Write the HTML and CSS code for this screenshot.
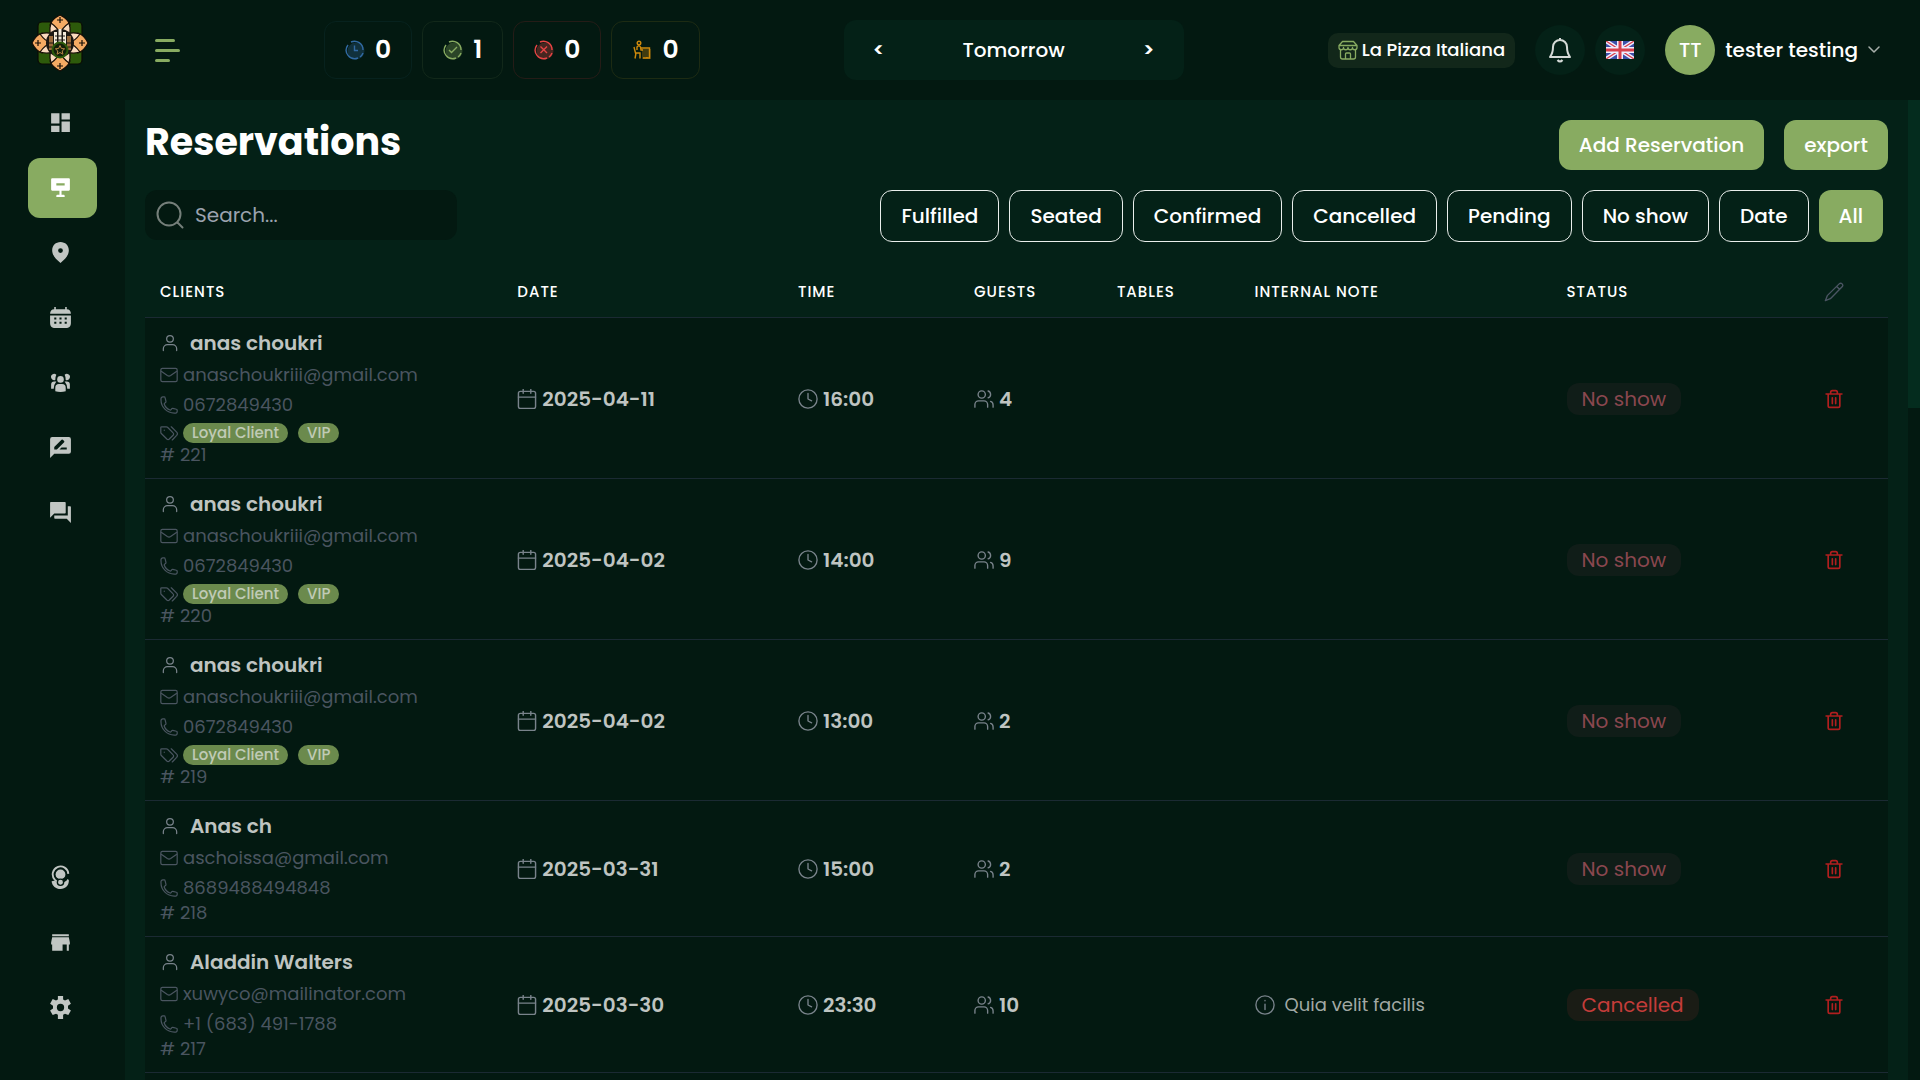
FILE: index.html
```html
<!DOCTYPE html>
<html lang="en">
<head>
<meta charset="utf-8">
<title>Reservations</title>
<link rel="stylesheet" href="styles.css">
</head>
<body>
<svg class="sprite" aria-hidden="true">
  <symbol id="i-user" viewBox="0 0 24 24"><circle cx="12" cy="7" r="4"/><path d="M20 21v-2a5 5 0 0 0-5-5H9a5 5 0 0 0-5 5v2"/></symbol>
  <symbol id="i-mail" viewBox="1 1 22 22"><rect x="2" y="4" width="20" height="16" rx="2"/><path d="M2.500 7.500l7.500 5.200q2 1.300 4 0l7.500-5.200"/></symbol>
  <symbol id="i-phone" viewBox="1 1 22 22"><path d="M2.200 5.500c0 9 7.300 16.300 16.300 16.300h2.300a2 2 0 0 0 1.200-1.800v-1.700a1.100 1.100 0 0 0-.9-1.100l-4.400-1.100a1.200 1.200 0 0 0-1.200.4l-1 1.300a1 1 0 0 1-1.200.3 12 12 0 0 1-7.100-7.100 1 1 0 0 1 .4-1.200l1.200-1a1.200 1.200 0 0 0 .5-1.200L7.200 3.100A1.100 1.100 0 0 0 6.100 2.200H4.400a2.200 2.200 0 0 0-2.200 2.200z"/></symbol>
  <symbol id="i-tags" viewBox="1 1 22 22"><path d="M2 5.500v5.600a2 2 0 0 0 .6 1.500l6.800 6.800a2 2 0 0 0 2.900 0l4.700-4.700a2 2 0 0 0 0-2.900L10.200 5a2 2 0 0 0-1.500-.6H3.100A1 1 0 0 0 2 5.500z"/><path d="M16 20.500l5.400-5.600a3 3 0 0 0 0-4L14.800 4.400M6.200 8.600v.1"/></symbol>
  <symbol id="i-calendar" viewBox="1.500 1.500 21 21"><rect x="3" y="4" width="18" height="18" rx="2"/><path d="M3 10h18M8 2v4M16 2v4"/></symbol>
  <symbol id="i-clock" viewBox="1 1 22 22"><circle cx="12" cy="12" r="10"/><path d="M12 6v6l4 2"/></symbol>
  <symbol id="i-guests" viewBox="1 1 22 22"><path d="M2 21v-3a4 4 0 0 1 4-4h6a4 4 0 0 1 4 4v3M22 21v-2.500a4 4 0 0 0-2.800-3.800M16.500 3.200a4 4 0 0 1 0 7.600"/><circle cx="9.500" cy="7" r="4"/></symbol>
  <symbol id="i-trash" viewBox="0 0 24 24"><path d="M2.500 6h19M19 6v14a2 2 0 0 1-2 2H7a2 2 0 0 1-2-2V6M8 6V4a2 2 0 0 1 2-2h4a2 2 0 0 1 2 2v2M10 10.500v7M14 10.500v7"/></symbol>
  <symbol id="i-pencil" viewBox="1 1 22 22"><path d="M18 2.800a2.300 2.300 0 0 1 3.200 3.200L8 19.400l-5.500 2.100L4.600 16zM15 6l3 3"/></symbol>
  <symbol id="i-info" viewBox="1 1 22 22"><circle cx="12" cy="12" r="10"/><path d="M12 11v6M12 7v.4"/></symbol>
</svg>

<div class="app">
  <aside class="sidebar">
    <a href="#" class="logo" aria-label="Home">
      <svg width="58" height="58" viewBox="0 0 58 58">
        <g fill="#2d5a0b" stroke="#0a0a05" stroke-width="1.200">
          <rect x="7" y="8" width="20" height="20" rx="4"/><rect x="31" y="8" width="20" height="20" rx="4"/>
          <rect x="7" y="31" width="20" height="19" rx="4"/><rect x="31" y="31" width="20" height="19" rx="4"/>
        </g>
        <g stroke="#150d06" stroke-width="1.200">
          <g fill="#f5aa63">
            <path d="M29 1q8 4 10 10-4 4-10 12-6-8-10-12 2-6 10-10z"/><path d="M29 57q8-4 10-10-4-4-10-12-6 8-10 12 2 6 10 10z"/>
            <path d="M1 29q4-8 10-10 4 4 12 10-8 6-12 10-6-2-10-10z"/><path d="M57 29q-4-8-10-10-4 4-12 10 8 6 12 10 6-2 10-10z"/>
          </g>
          <g fill="#f9d9bd">
            <path d="M20 9q-3 10 2 15l7-4q-2-6-9-11z"/><path d="M38 9q3 10-2 15l-7-4q2-6 9-11z"/>
            <path d="M20 49q-3-10 2-15l7 4q-2 6-9 11z"/><path d="M38 49q3-10-2-15l-7 4q2 6 9 11z"/>
            <path d="M9 20q10-3 15 2l-4 7q-6-2-11-9z"/><path d="M49 20q-10-3-15 2l4 7q6-2 11-9z"/>
            <path d="M9 38q10 3 15-2l-4-7q-6 2-11 9z"/><path d="M49 38q-10 3-15-2l4-7q6 2 11 9z"/>
          </g>
          <path d="M29 3v6M26 6h6M29 49v6M26 52h6M4 29h6M7 26v6M48 29h6M51 26v6" fill="none"/>
        </g>
        <circle cx="29" cy="29" r="14" fill="#1b1712"/>
        <path d="M18 22h4v14h-4zM36 22h4v14h-4z" fill="#9b6b3b"/>
        <path d="M23 18h3v15h-3zM27.500 15h3v18h-3zM32 18h3v15h-3z" fill="#f3ead9"/>
        <path d="M15 29h7M36 29h7M16 33h5M37 33h5M24 22h10M24 26h10" stroke="#1b1712"/>
        <circle cx="29" cy="36" r="7.500" fill="#12200a" stroke="#2d5a0b" stroke-width="2"/>
        <path d="M29 31.500l1.400 3 3.200.3-2.400 2.200.7 3.200-2.900-1.700-2.900 1.700.7-3.200-2.400-2.200 3.200-.3z" fill="none" stroke="#b98546"/>
      </svg>
    </a>
    <nav class="nav nav-top" aria-label="Main">
      <a href="#" aria-label="Dashboard"><svg viewBox="0 0 24 24"><path d="M3 13h8V3H3zM3 21h8v-6H3zM13 21h8V11h-8zM13 3v6h8V3z"/></svg></a>
      <a href="#" class="active" aria-label="Reservations"><svg viewBox="0 0 24 24"><path fill-rule="evenodd" d="M4 3h16a1 1 0 0 1 1 1v10a1 1 0 0 1-1 1h-7v4h2a1 1 0 0 1 1 1v1H8v-1a1 1 0 0 1 1-1h2v-4H4a1 1 0 0 1-1-1V4a1 1 0 0 1 1-1zM8 8v2h8V8z"/></svg></a>
      <a href="#" aria-label="Places"><svg viewBox="0 0 24 24"><path fill-rule="evenodd" d="M12 2c-4.600 0-8 3.400-8 7.800 0 4.700 3.500 8.700 8 12.200 4.500-3.500 8-7.500 8-12.200C20 5.400 16.600 2 12 2zm0 5.800a2.300 2.300 0 1 1 0 4.600 2.300 2.300 0 0 1 0-4.600z"/></svg></a>
      <a href="#" aria-label="Calendar"><svg viewBox="0 0 24 24"><path d="M2 8.500C2 5.800 3.400 4 6 4V2h1.500v2h9V2H18v2c2.600 0 4 1.800 4 4.500z"/><path fill-rule="evenodd" d="M2 10h20v7c0 3.500-1.500 5-5 5H7c-3.500 0-5-1.500-5-5zm4 2v2h2v-2zm5 0v2h2v-2zm5 0v2h2v-2zM6 16v2h2v-2zm5 0v2h2v-2zm5 0v2h2v-2z"/></svg></a>
      <a href="#" aria-label="Clients"><svg viewBox="0 0 24 24"><circle cx="12" cy="9" r="3.200"/><path d="M7 20.500v-3.500a3.500 3.500 0 0 1 3.500-3.500h3a3.500 3.500 0 0 1 3.500 3.500v3.500q-5 1.200-10 0zM8 4.500a3 3 0 1 0-1 5q0-3 1-5zM16 4.500a3 3 0 1 1 1 5q0-3-1-5zM3 18v-4a3 3 0 0 1 3-3h2q-2.500 3-2.500 7zM21 18v-4a3 3 0 0 0-3-3h-2q2.500 3 2.500 7z"/></svg></a>
      <a href="#" aria-label="Reviews"><svg viewBox="0 0 24 24"><path fill-rule="evenodd" d="M4 2h16a2 2 0 0 1 2 2v12a2 2 0 0 1-2 2H6l-4 4V4a2 2 0 0 1 2-2zm2 12h2.500l7-7a1 1 0 0 0 0-1.200l-1.300-1.300a1 1 0 0 0-1.200 0l-7 7zm12 0v-2h-5l-2 2z"/></svg></a>
      <a href="#" aria-label="Messages"><svg viewBox="0 0 24 24"><path d="M21 6h-2v9H6v2c0 .6.400 1 1 1h11l4 4V7c0-.6-.4-1-1-1zM17 12V3c0-.6-.4-1-1-1H3c-.6 0-1 .4-1 1v14l4-4h10c.6 0 1-.4 1-1z"/></svg></a>
    </nav>
    <nav class="nav nav-bottom" aria-label="Settings">
      <a href="#" aria-label="Plans"><svg viewBox="0 0 24 24"><path d="M3.500 15.500c.4 4.500 4 7.500 8.500 7.500 4.700 0 8.300-3.200 8-8.500l-1.200-1H14z"/><circle cx="12" cy="9" r="8.200" fill="#031911"/><circle cx="12" cy="9" r="4.700"/><path d="M19.500 8.500A7.500 7.500 0 1 0 6.500 14l3 3" fill="none" stroke="currentColor" stroke-width="1.800"/><circle cx="12" cy="16.500" r="3" stroke="#031911" stroke-width="1.300"/></svg></a>
      <a href="#" aria-label="Store"><svg viewBox="0 0 24 24"><path d="M4 4h16v2H4zM20 7H4l-1 5v2h1v6h10v-6h4v6h2v-6h1v-2z"/></svg></a>
      <a href="#" aria-label="Preferences"><svg viewBox="0 0 24 24"><path fill-rule="evenodd" d="M9.500 1h5v3.300q1 .4 1.800 1l3.200-1.400 2.500 4.400-2.800 2v2.600l2.800 2-2.500 4.400-3.200-1.400q-.8.600-1.800 1V23h-5v-4.100q-1-.4-1.800-1l-3.200 1.400L2 14.900l2.800-2v-2.600L2 8.300l2.500-4.400 3.200 1.400q.8-.6 1.800-1zM12 8.500a3.500 3.500 0 1 0 0 7 3.500 3.500 0 0 0 0-7z"/></svg></a>
    </nav>
  </aside>

  <div class="content">
    <header class="topbar">
      <button class="menu" aria-label="Toggle menu"><span class="bar mid"></span><span class="bar"></span><span class="bar short"></span></button>
      <div class="stats">
        <div class="stat pending"><svg viewBox="0 0 20 20"><circle class="shade" cx="11" cy="11" r="8.500"/><path d="M6 2a8.500 8.500 0 0 1 12 8M18 13a8.500 8.500 0 0 1-3 4M13 18A8.500 8.500 0 0 1 3 5M9.500 5.500V10.500H13"/></svg>0</div>
        <div class="stat confirmed"><svg viewBox="0 0 20 20"><circle class="shade" cx="11" cy="11" r="8.500"/><path d="M6 2a8.500 8.500 0 0 1 12 8M18 13a8.500 8.500 0 0 1-3 4M13 18A8.500 8.500 0 0 1 3 5M6 10l2.500 2.500L14 7"/></svg>1</div>
        <div class="stat cancelled"><svg viewBox="0 0 20 20"><circle class="shade" cx="11" cy="11" r="8.500"/><path d="M6 2a8.500 8.500 0 0 1 12 8M18 13a8.500 8.500 0 0 1-3 4M13 18A8.500 8.500 0 0 1 3 5M6.500 6.500l6.500 6.500M13 6.500L6.500 13"/></svg>0</div>
        <div class="stat seated"><svg viewBox="0 0 20 20"><rect class="shade" x="10" y="9" width="9" height="10"/><path d="M2 7l1.500 6H8v5.500M4 13l-1 5.500M5 10V7q2-2.500 3.500 0L9 10h2M9 8h8.500v10H11M15 18v-1"/><circle cx="7" cy="3" r="1.800"/></svg>0</div>
      </div>
      <div class="day">
        <button aria-label="Previous day">&lt;</button><span>Tomorrow</span><button aria-label="Next day">&gt;</button>
      </div>
      <div class="account">
        <a href="#" class="place"><svg viewBox="0 0 20 20"><path d="M4.500 1.500h11L19 5.500v2a2.200 2.200 0 0 1-4.500 0 2.200 2.200 0 0 1-4.500 0 2.200 2.200 0 0 1-4.500 0A2.200 2.200 0 0 1 1 7.500v-2zM1 5.500h18M2.500 9.500v7.500a2 2 0 0 0 2 2h11a2 2 0 0 0 2-2V9.500M7.500 19v-5a1 1 0 0 1 1-1h3a1 1 0 0 1 1 1v5"/></svg>La Pizza Italiana</a>
        <button class="round" aria-label="Notifications"><svg width="24" height="28" viewBox="0 0 24 28"><path d="M2 21q3-4 3-10a7 7 0 0 1 14 0q0 6 3 10zM12 4V2" /><path d="M9.500 24q2.500 3 5 0"/></svg></button>
        <button class="round" aria-label="Language"><svg width="28" height="18" viewBox="0 0 28 18"><path fill="#3c4fa8" stroke="none" d="M0 0h28v18H0z"/><path d="M0 0l28 18M28 0L0 18" stroke="#eef" stroke-width="4"/><path d="M0 0l28 18M28 0L0 18" stroke="#d8404c" stroke-width="1.300"/><path d="M14 0v18M0 9h28" stroke="#eef" stroke-width="6"/><path d="M14 0v18M0 9h28" stroke="#d8404c" stroke-width="3"/></svg></button>
        <button class="profile"><span class="avatar">TT</span><span>tester testing</span><svg width="12" height="8" viewBox="0 0 12 8"><path d="M1 1l5 5 5-5"/></svg></button>
      </div>
    </header>

    <div class="view">
      <main class="main">
        <div class="title-row">
          <h1>Reservations</h1>
          <div class="actions"><button class="primary">Add Reservation</button><button class="primary">export</button></div>
        </div>
        <div class="tools">
          <label class="search"><svg viewBox="0 0 28 28"><circle cx="13" cy="13" r="11.500"/><path d="M21.500 21.500l5 5"/></svg><input type="search" placeholder="Search..." aria-label="Search"></label>
          <div class="filters">
            <button>Fulfilled</button><button>Seated</button><button>Confirmed</button><button>Cancelled</button><button>Pending</button><button>No show</button><button>Date</button><button class="on">All</button>
          </div>
        </div>
        <table>
          <colgroup><col class="c-client"><col class="c-date"><col class="c-time"><col class="c-guests"><col class="c-tables"><col class="c-note"><col class="c-status"><col class="c-edit"></colgroup>
          <thead>
            <tr><th>CLIENTS</th><th>DATE</th><th>TIME</th><th>GUESTS</th><th>TABLES</th><th>INTERNAL NOTE</th><th>STATUS</th><th class="edit"><svg class="icon" aria-label="Edit"><use href="#i-pencil"/></svg></th></tr>
          </thead>
          <tbody>
            <tr>
              <td class="client"><div class="name"><svg class="icon"><use href="#i-user"/></svg>anas choukri</div><div class="line"><svg class="icon"><use href="#i-mail"/></svg>anaschoukriii@gmail.com</div><div class="line"><svg class="icon"><use href="#i-phone"/></svg>0672849430</div><div class="tags"><svg class="icon"><use href="#i-tags"/></svg><span>Loyal Client</span><span>VIP</span></div><div class="num"># 221</div></td>
              <td><div class="fact"><svg class="icon"><use href="#i-calendar"/></svg>2025-04-11</div></td>
              <td><div class="fact"><svg class="icon"><use href="#i-clock"/></svg>16:00</div></td>
              <td><div class="fact"><svg class="icon"><use href="#i-guests"/></svg>4</div></td>
              <td></td><td></td>
              <td><span class="status">No show</span></td>
              <td class="edit"><button class="del" aria-label="Delete"><svg class="icon"><use href="#i-trash"/></svg></button></td>
            </tr>
            <tr>
              <td class="client"><div class="name"><svg class="icon"><use href="#i-user"/></svg>anas choukri</div><div class="line"><svg class="icon"><use href="#i-mail"/></svg>anaschoukriii@gmail.com</div><div class="line"><svg class="icon"><use href="#i-phone"/></svg>0672849430</div><div class="tags"><svg class="icon"><use href="#i-tags"/></svg><span>Loyal Client</span><span>VIP</span></div><div class="num"># 220</div></td>
              <td><div class="fact"><svg class="icon"><use href="#i-calendar"/></svg>2025-04-02</div></td>
              <td><div class="fact"><svg class="icon"><use href="#i-clock"/></svg>14:00</div></td>
              <td><div class="fact"><svg class="icon"><use href="#i-guests"/></svg>9</div></td>
              <td></td><td></td>
              <td><span class="status">No show</span></td>
              <td class="edit"><button class="del" aria-label="Delete"><svg class="icon"><use href="#i-trash"/></svg></button></td>
            </tr>
            <tr>
              <td class="client"><div class="name"><svg class="icon"><use href="#i-user"/></svg>anas choukri</div><div class="line"><svg class="icon"><use href="#i-mail"/></svg>anaschoukriii@gmail.com</div><div class="line"><svg class="icon"><use href="#i-phone"/></svg>0672849430</div><div class="tags"><svg class="icon"><use href="#i-tags"/></svg><span>Loyal Client</span><span>VIP</span></div><div class="num"># 219</div></td>
              <td><div class="fact"><svg class="icon"><use href="#i-calendar"/></svg>2025-04-02</div></td>
              <td><div class="fact"><svg class="icon"><use href="#i-clock"/></svg>13:00</div></td>
              <td><div class="fact"><svg class="icon"><use href="#i-guests"/></svg>2</div></td>
              <td></td><td></td>
              <td><span class="status">No show</span></td>
              <td class="edit"><button class="del" aria-label="Delete"><svg class="icon"><use href="#i-trash"/></svg></button></td>
            </tr>
            <tr>
              <td class="client"><div class="name"><svg class="icon"><use href="#i-user"/></svg>Anas ch</div><div class="line"><svg class="icon"><use href="#i-mail"/></svg>aschoissa@gmail.com</div><div class="line"><svg class="icon"><use href="#i-phone"/></svg>8689488494848</div><div class="num"># 218</div></td>
              <td><div class="fact"><svg class="icon"><use href="#i-calendar"/></svg>2025-03-31</div></td>
              <td><div class="fact"><svg class="icon"><use href="#i-clock"/></svg>15:00</div></td>
              <td><div class="fact"><svg class="icon"><use href="#i-guests"/></svg>2</div></td>
              <td></td><td></td>
              <td><span class="status">No show</span></td>
              <td class="edit"><button class="del" aria-label="Delete"><svg class="icon"><use href="#i-trash"/></svg></button></td>
            </tr>
            <tr>
              <td class="client"><div class="name"><svg class="icon"><use href="#i-user"/></svg>Aladdin Walters</div><div class="line"><svg class="icon"><use href="#i-mail"/></svg>xuwyco@mailinator.com</div><div class="line"><svg class="icon"><use href="#i-phone"/></svg>+1 (683) 491-1788</div><div class="num"># 217</div></td>
              <td><div class="fact"><svg class="icon"><use href="#i-calendar"/></svg>2025-03-30</div></td>
              <td><div class="fact"><svg class="icon"><use href="#i-clock"/></svg>23:30</div></td>
              <td><div class="fact"><svg class="icon"><use href="#i-guests"/></svg>10</div></td>
              <td></td><td><div class="note"><svg class="icon"><use href="#i-info"/></svg>Quia velit facilis</div></td>
              <td><span class="status cancelled-status">Cancelled</span></td>
              <td class="edit"><button class="del" aria-label="Delete"><svg class="icon"><use href="#i-trash"/></svg></button></td>
            </tr>
            <tr><td colspan="8"></td></tr>
          </tbody>
        </table>
      </main>
      <div class="scroll"><div class="thumb"></div></div>
    </div>
  </div>
</div>
</body>
</html>
```
FILE: styles.css
```css
:root {
  --deep: #031911;
  --panel: #042117;
  --green: #88ab61;
}
* { box-sizing: border-box; }
body {
  margin: 0;
  background: var(--deep);
  color: #fff;
  font: 500 20px/30px Poppins, Inter, sans-serif;
}
button {
  border: 0;
  padding: 0;
  background: none;
  color: inherit;
  font: inherit;
  cursor: pointer;
}
a { color: inherit; text-decoration: none; }
svg { display: block; flex: none; }
.sprite { position: absolute; width: 0; height: 0; }
.icon {
  width: 20px;
  height: 20px;
  fill: none;
  stroke: currentColor;
  stroke-width: 1.5;
  stroke-linecap: round;
  stroke-linejoin: round;
}

.app { display: flex; height: 100vh; overflow: hidden; }

.sidebar {
  flex: none;
  width: 125px;
  display: flex;
  flex-direction: column;
  padding: 14px 28px 43px;
}
.logo { align-self: center; margin: 0 6px 21px 0; }
.nav { display: flex; flex-direction: column; gap: 5px; color: #c1c6c3; }
.nav a {
  display: flex;
  align-items: center;
  justify-content: center;
  height: 60px;
  padding-right: 4px;
  border-radius: 12px;
}
.nav-top a { padding-bottom: 2px; }
.nav svg { width: 25px; height: 25px; fill: currentColor; }
.nav .active { background: var(--green); color: #fff; }
.nav-bottom { margin-top: auto; }

.content { flex: 1; min-width: 0; display: flex; flex-direction: column; }

.topbar {
  flex: none;
  height: 100px;
  display: flex;
  align-items: center;
  justify-content: space-between;
  padding: 0 40px 0 30px;
}
.menu { display: flex; flex-direction: column; gap: 7px; width: 25px; }
.bar { width: 25px; height: 3px; border-radius: 2px; background: var(--green); }
.bar.mid { width: 20px; }
.bar.short { width: 15px; }
.stats { display: flex; gap: 10px; }
.stat {
  display: flex;
  align-items: center;
  gap: 10px;
  height: 58px;
  padding: 0 20px;
  border: 1px solid;
  border-radius: 12px;
  font-size: 25px;
  font-weight: 600;
}
.stat svg {
  width: 20px;
  height: 20px;
  fill: none;
  stroke: var(--tone);
  stroke-width: 1.4;
}
.stat .shade { fill: var(--tone); fill-opacity: .3; stroke: none; }
.pending { --tone: #316aa3; border-color: #07221e; }
.confirmed { --tone: #88ab61; border-color: #12281a; }
.cancelled { --tone: #e64444; border-color: #251c17; }
.seated { --tone: #cf8a0c; border-color: #1d2b13; }
.day {
  width: 340px;
  height: 60px;
  display: flex;
  align-items: center;
  justify-content: space-between;
  padding: 0 25px;
  border-radius: 12px;
  background: var(--panel);
}
.day button { width: 20px; font-weight: 600; }
.account { display: flex; align-items: center; gap: 10px; }
.account svg {
  fill: none;
  stroke: #d5dad7;
  stroke-width: 2;
  stroke-linecap: round;
  stroke-linejoin: round;
}
.place {
  display: flex;
  align-items: center;
  gap: 4px;
  height: 35px;
  margin-right: 10px;
  padding: 0 10px;
  border-radius: 10px;
  background: #12271a;
  font-size: 18px;
}
.account .place svg { width: 20px; height: 20px; stroke: var(--green); stroke-width: 1.3; }
.round {
  display: flex;
  align-items: center;
  justify-content: center;
  width: 50px;
  height: 50px;
  border-radius: 50%;
  background: var(--panel);
}
.account .round svg { stroke-linecap: butt; }
.profile { display: flex; align-items: center; gap: 10px; margin-left: 10px; }
.avatar {
  width: 50px;
  height: 50px;
  border-radius: 50%;
  background: var(--green);
  line-height: 50px;
}
.account .profile svg { stroke: #a8afab; stroke-width: 1.5; }

.view { flex: 1; min-height: 0; display: flex; background: var(--panel); }
.main { flex: 1; min-width: 0; padding: 20px; overflow: hidden; }
.scroll { flex: none; width: 12px; background: var(--deep); }
.thumb { height: 31.4%; background: #042c1e; }

.title-row { display: flex; justify-content: space-between; margin-bottom: 20px; }
h1 { margin: 0; font-size: 38px; line-height: 44px; font-weight: 700; }
.actions { display: flex; gap: 20px; }
.primary {
  height: 50px;
  padding: 0 20px;
  border-radius: 12px;
  background: var(--green);
}
.tools { display: flex; justify-content: space-between; padding-right: 5px; }
.search {
  display: flex;
  align-items: center;
  gap: 11px;
  width: 312px;
  height: 50px;
  padding: 0 11px;
  border-radius: 12px;
  background: var(--deep);
}
.search svg {
  width: 28px;
  height: 28px;
  fill: none;
  stroke: #757f7a;
  stroke-width: 2;
  stroke-linecap: round;
}
.search input {
  width: 100%;
  min-width: 0;
  border: 0;
  padding: 0;
  outline: 0;
  background: none;
  color: #fff;
  font: 400 20px/30px Poppins, Inter, sans-serif;
}
.search input::placeholder { color: #9ca3af; }
.filters { display: flex; gap: 10px; }
.filters button {
  height: 52px;
  padding: 0 20px;
  border: 1px solid #e9eeeb;
  border-radius: 12px;
}
.filters .on { background: var(--green); border: 0; }

table { width: 100%; margin-top: 24px; border-collapse: collapse; table-layout: fixed; }
.c-client { width: 20.5%; }
.c-date { width: 16.1%; }
.c-time { width: 10.1%; }
.c-guests { width: 8.2%; }
.c-tables { width: 7.9%; }
.c-note { width: 17.9%; }
.c-status { width: 13.1%; }
.c-edit { width: 6.2%; }
th {
  height: 51px;
  padding: 2px 15px 0;
  text-align: left;
  font-size: 15px;
  font-weight: 500;
  letter-spacing: 1px;
}
th .icon { color: #4b5563; }
tr { border-bottom: 1px solid #1b2a33; }
tbody { background: var(--deep); color: #bfc4c1; }
td { padding: 12px 15px 10px; vertical-align: middle; }
.client { padding: 10px 15px 11px; }
td > div { display: flex; align-items: center; }
.name { gap: 10px; font-weight: 600; }
.name .icon, .fact .icon, .note .icon { color: #79838b; }
.line, .num, .tags { color: #4a5560; font-size: 18px; font-weight: 400; }
.line { gap: 5px; height: 26px; margin-top: 4px; }
.line .icon, .tags .icon { width: 18px; height: 18px; }
.tags { gap: 10px; margin-top: 5px; }
.tags .icon { margin-right: -5px; }
.tags span {
  height: 20px;
  padding: 0 9px;
  border-radius: 10px;
  background: #6b8a4d;
  color: #c0cbb6;
  font-size: 15px;
  font-weight: 500;
  line-height: 20px;
}
.num { height: 24px; }
.fact { gap: 5px; font-weight: 600; }
.note { gap: 10px; color: #a2a9a5; font-size: 18px; font-weight: 400; }
.status {
  display: inline-block;
  height: 32px;
  padding: 0 15px;
  border-radius: 12px;
  background: #101d18;
  color: #8a474f;
  font-weight: 400;
  line-height: 32px;
}
.cancelled-status { background: #1a1c15; color: #c43c3a; }
td.edit, th.edit { padding: 2px 0 0; }
.edit .icon { margin: 0 auto; }
.del { display: block; margin: 0 auto; color: #b01f1f; }
.del .icon { stroke-width: 2; }
```
